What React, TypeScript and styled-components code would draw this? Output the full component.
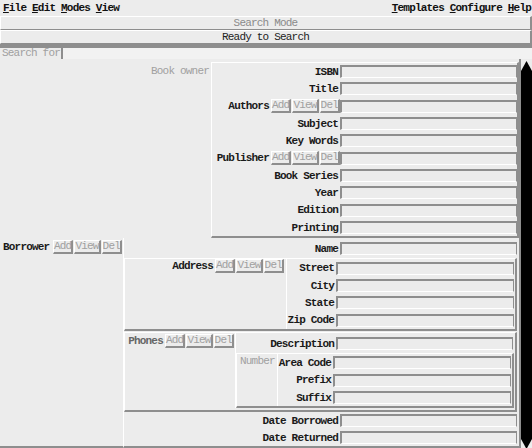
import React from 'react';
import styled, { createGlobalStyle } from 'styled-components';

const GRAY = '#8e8e8e';
const LIGHT = '#ffffff';
const BG = '#ececec';
const DIM = '#a0a0a0';

const GlobalStyle = createGlobalStyle`
  html, body { margin: 0; padding: 0; background: ${BG}; }
  body {
    font-family: "Liberation Mono", "DejaVu Sans Mono", monospace;
    font-size: 11px;
    letter-spacing: -0.8px;
    color: #111;
  }
`;

const Window = styled.div`
  width: 532px;
  height: 448px;
  display: flex;
  flex-direction: column;
  overflow: hidden;
  background: ${BG};
`;

const MenuBar = styled.div`
  height: 16px;
  flex: none;
  display: flex;
  justify-content: space-between;
  align-items: center;
  padding: 0 1px 0 3px;
  font-weight: bold;
`;

const MenuGroup = styled.div`
  display: flex;
  gap: 5.8px;
`;

const StatusGroup = styled.div`
  flex: none;
  border-bottom: 4px solid ${GRAY};
`;

const StatusBar = styled.div<{ $dim?: boolean }>`
  height: 14px;
  box-sizing: border-box;
  border-style: solid;
  border-width: 1px 2px 1px 1px;
  border-color: ${LIGHT} ${GRAY} ${GRAY} ${LIGHT};
  text-align: center;
  line-height: 12px;
  color: ${p => (p.$dim ? '#8a8a8a' : '#222')};
`;

const SearchRow = styled.div`
  height: 11px;
  flex: none;
  display: flex;
`;

const SearchLabel = styled.div`
  width: 59px;
  padding-left: 2px;
  line-height: 11px;
  color: ${DIM};
`;

const SearchEntry = styled.div`
  flex: 1;
  border-left: 2px solid ${GRAY};
  background: #f2f2f2;
`;

const Main = styled.div`
  flex: 1;
  min-height: 0;
  display: flex;
`;

const Content = styled.div`
  width: 519px;
  display: flex;
  flex-direction: column;
`;

const ScrollTrack = styled.div`
  flex: 1;
  padding-top: 2px;
  border-left: 2px solid ${GRAY};
  display: flex;
  justify-content: flex-end;
`;

const BookSection = styled.div`
  display: flex;
  padding-top: 3px;
`;

const OwnerPane = styled.div`
  width: 209px;
  padding: 3px 2px 0 0;
  text-align: right;
  color: ${DIM};
`;

const Panel = styled.div`
  border-style: solid;
  border-width: 1px 2px 2px 1px;
  border-color: ${LIGHT} ${GRAY} ${GRAY} ${LIGHT};
`;

const Fields = styled.div<{ $label: number; $right?: number; $row?: number; $top?: number }>`
  display: grid;
  grid-template-columns: ${p => p.$label}px 1fr;
  grid-auto-rows: ${p => p.$row ?? 17.33}px;
  align-items: center;
  padding-top: ${p => p.$top ?? 0}px;
  padding-right: ${p => p.$right ?? 0}px;
`;

const Label = styled.div`
  display: flex;
  justify-content: flex-end;
  align-items: center;
  white-space: nowrap;
  font-weight: bold;
  color: #1a1a1a;
`;

const LabelText = styled.span`
  margin-right: 2px;
`;

const Entry = styled.div`
  height: 13px;
  box-sizing: border-box;
  border-style: solid;
  border-width: 2px 1px 1px 2px;
  border-color: ${GRAY} ${GRAY} ${LIGHT} ${GRAY};
`;

const ButtonGroup = styled.div`
  display: flex;
  gap: 1px;
`;

const Btn = styled.div`
  height: 14px;
  box-sizing: border-box;
  border-style: solid;
  border-width: 1px 2px 2px 1px;
  border-color: ${LIGHT} ${GRAY} ${GRAY} ${LIGHT};
  line-height: 11px;
  font-weight: normal;
  color: ${DIM};
`;

const BorrowerSection = styled.div`
  flex: 1;
  min-height: 0;
  display: flex;
`;

const BorrowerPane = styled.div`
  width: 123px;
  box-sizing: border-box;
  display: flex;
  align-items: flex-start;
  justify-content: space-between;
  padding: 2px 1px 0 3px;
  border-bottom: 2px solid ${GRAY};
`;

const Heading = styled.span<{ $dim?: boolean }>`
  font-weight: bold;
  line-height: 14px;
  color: ${p => (p.$dim ? '#666' : '#1a1a1a')};
`;

const BorrowerBody = styled.div`
  flex: 1;
  display: flex;
  flex-direction: column;
  padding: 2px 2px 0 0;
  border-left: 1px solid ${LIGHT};
  border-bottom: 2px solid ${GRAY};
`;

const SubPanel = styled(Panel)<{ $bottom?: number }>`
  display: flex;
  padding-bottom: ${p => p.$bottom ?? 0}px;
`;

const SideHead = styled.div<{ $width: number; $pad?: string }>`
  width: ${p => p.$width}px;
  box-sizing: border-box;
  display: flex;
  justify-content: flex-end;
  align-items: flex-start;
  gap: 2px;
  padding: ${p => p.$pad ?? '0 2px 0 0'};
`;

const SubForm = styled.div`
  flex: 1;
  border-left: 1px solid ${LIGHT};
  display: flex;
  flex-direction: column;
`;

const NumberPanel = styled(Panel)`
  display: flex;
  margin-right: 1px;
`;

const NumberHead = styled.div`
  width: 40px;
  padding: 1px 0 0 3px;
  box-sizing: border-box;
  color: ${DIM};
`;

const Buttons = () => (
  <ButtonGroup>
    <Btn>Add</Btn>
    <Btn>View</Btn>
    <Btn>Del</Btn>
  </ButtonGroup>
);

const Field = ({ label, buttons }: { label: string; buttons?: boolean }) => (
  <>
    <Label>
      <LabelText>{label}</LabelText>
      {buttons && <Buttons />}
    </Label>
    <Entry />
  </>
);

const ScrollBar = () => (
  <svg width="11" height="388" viewBox="0 0 11 388">
    <polygon points="5.5,0 0,10 0,378 5.5,388 11,378 11,10" fill="#000" />
  </svg>
);

const bookFields: [string, boolean?][] = [
  ['ISBN'],
  ['Title'],
  ['Authors', true],
  ['Subject'],
  ['Key Words'],
  ['Publisher', true],
  ['Book Series'],
  ['Year'],
  ['Edition'],
  ['Printing'],
];

export default function App() {
  return (
    <>
      <GlobalStyle />
      <Window>
        <MenuBar>
          <MenuGroup>
            <span><u>F</u>ile</span>
            <span><u>E</u>dit</span>
            <span><u>M</u>odes</span>
            <span><u>V</u>iew</span>
          </MenuGroup>
          <MenuGroup>
            <span><u>T</u>emplates</span>
            <span><u>C</u>onfigure</span>
            <span><u>H</u>elp</span>
          </MenuGroup>
        </MenuBar>
        <StatusGroup>
          <StatusBar $dim>Search Mode</StatusBar>
          <StatusBar>Ready to Search</StatusBar>
        </StatusGroup>
        <SearchRow>
          <SearchLabel>Search for</SearchLabel>
          <SearchEntry />
        </SearchRow>
        <Main>
          <Content>
            <BookSection>
              <OwnerPane>Book owner</OwnerPane>
              <Panel>
                <Fields $label={128} style={{ width: 305 }}>
                  {bookFields.map(([l, b]) => (
                    <Field key={l} label={l} buttons={b} />
                  ))}
                </Fields>
              </Panel>
            </BookSection>
            <BorrowerSection>
              <BorrowerPane>
                <Heading>Borrower</Heading>
                <Buttons />
              </BorrowerPane>
              <BorrowerBody>
                <Fields $label={216}>
                  <Field label="Name" />
                </Fields>
                <SubPanel>
                  <SideHead $width={161}>
                    <Heading>Address</Heading>
                    <Buttons />
                  </SideHead>
                  <SubForm>
                    <Fields $label={49} $right={1} $top={1}>
                      <Field label="Street" />
                      <Field label="City" />
                      <Field label="State" />
                      <Field label="Zip Code" />
                    </Fields>
                  </SubForm>
                </SubPanel>
                <SubPanel $bottom={2} style={{ marginTop: 1 }}>
                  <SideHead $width={110} $pad="1px 1px 0 2px">
                    <Heading $dim>Phones</Heading>
                    <Buttons />
                  </SideHead>
                  <SubForm>
                    <Fields $label={100} $right={2} $row={18} $top={2}>
                      <Field label="Description" />
                    </Fields>
                    <NumberPanel>
                      <NumberHead>Number</NumberHead>
                      <SubForm>
                        <Fields $label={55} $right={1} $row={17.5}>
                          <Field label="Area Code" />
                          <Field label="Prefix" />
                          <Field label="Suffix" />
                        </Fields>
                      </SubForm>
                    </NumberPanel>
                  </SubForm>
                </SubPanel>
                <Fields $label={216} $row={17}>
                  <Field label="Date Borrowed" />
                  <Field label="Date Returned" />
                </Fields>
              </BorrowerBody>
            </BorrowerSection>
          </Content>
          <ScrollTrack>
            <ScrollBar />
          </ScrollTrack>
        </Main>
      </Window>
    </>
  );
}
